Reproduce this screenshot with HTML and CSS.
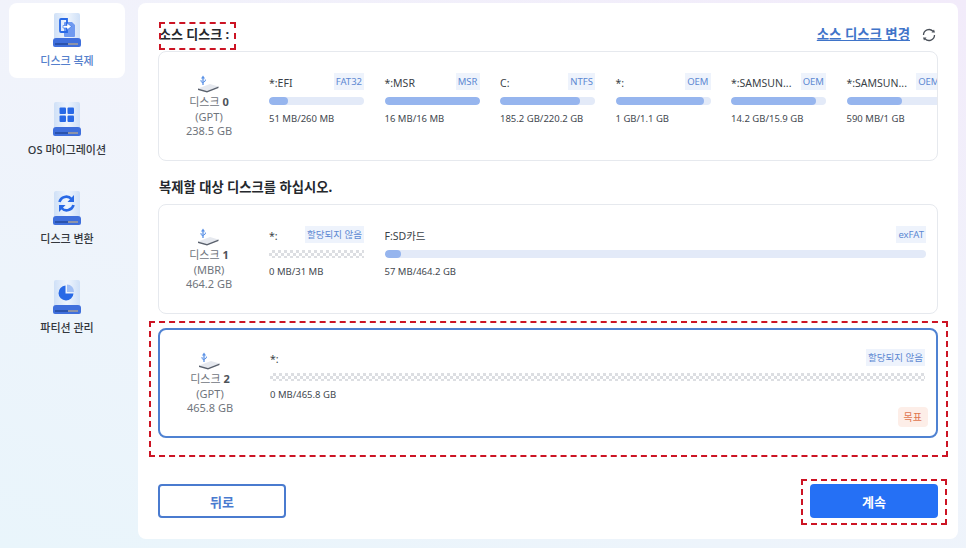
FILE: index.html
```html
<!DOCTYPE html>
<html lang="ko">
<head>
    <meta charset="utf-8">
    <title>디스크 복제</title>
    <link rel="stylesheet" href="styles.css">
</head>
<body>
    <svg class="defs" width="0" height="0">
        <defs>
            <linearGradient id="bookbody" x1="0" x2="1" y1="0" y2="0">
                <stop offset="0" stop-color="#cfe0f7"/>
                <stop offset="0.5" stop-color="#eff5fd"/>
                <stop offset="1" stop-color="#cfe0f7"/>
            </linearGradient>
        </defs>
        <symbol id="book" viewBox="0 0 28 34">
            <path d="M3 0h22a2 2 0 0 1 2 2v24H1V2a2 2 0 0 1 2-2z" fill="url(#bookbody)"/>
            <path d="M3 25h22a3 3 0 0 1 3 3v4a2 2 0 0 1-2 2H2a2 2 0 0 1-2-2v-4a3 3 0 0 1 3-3z" fill="#3f6fdc"/>
            <rect x="2" y="30" width="14" height="2" fill="#2a52ac"/>
            <rect x="15" y="30" width="10" height="2" fill="#8d93a8"/>
        </symbol>
        <symbol id="usbdisk" viewBox="0 0 22 22">
            <path d="M5 2.500L3 5.500h4z" fill="#5b92e6"/>
            <path d="M5 5v7" fill="none" stroke="#5b92e6" stroke-width="1.300"/>
            <path d="M5 9.500L7.300 8V6.500M5 10L3 8.500V7" fill="none" stroke="#5b92e6" stroke-width="1"/>
            <path d="M0 15.500L12 11l8.500 2.500L9 18z" fill="#e6e9ef"/>
            <path d="M0 15.500L9 18l11.500-4.500V15L9 19.500 0 17z" fill="#5a616d"/>
        </symbol>
    </svg>

    <div class="app">
        <nav class="sidebar">
            <a class="nav-item active">
                <svg class="nav-icon" viewBox="0 0 28 34">
                    <use href="#book"/>
                    <path d="M12 9h7l3 3v11a1 1 0 0 1-1 1h-9a1 1 0 0 1-1-1V10a1 1 0 0 1 1-1z" fill="#6f9af0"/>
                    <path d="M8 6h6v13H8a1 1 0 0 1-1-1V7a1 1 0 0 1 1-1z" fill="none" stroke="#2869e6" stroke-width="1.800"/>
                    <path d="M10 15v-2.500h4V10l4.500 3.500L14 17v-2z" fill="#fff" stroke="#2869e6" stroke-width="0.600"/>
                </svg>
                <span>디스크 복제</span>
            </a>
            <a class="nav-item">
                <svg class="nav-icon" viewBox="0 0 28 34">
                    <use href="#book"/>
                    <rect x="6.500" y="5.500" width="6.500" height="6.500" rx="1" fill="#2869e6"/>
                    <rect x="14.500" y="5.500" width="6.500" height="6.500" rx="1" fill="#2869e6"/>
                    <rect x="6.500" y="13.500" width="6.500" height="6.500" rx="1" fill="#2869e6"/>
                    <rect x="14.500" y="13.500" width="6.500" height="6.500" rx="1" fill="#2869e6"/>
                </svg>
                <span>OS 마이그레이션</span>
            </a>
            <a class="nav-item">
                <svg class="nav-icon" viewBox="0 0 28 34">
                    <use href="#book"/>
                    <path d="M6.500 11a7 7 0 0 1 12-3" fill="none" stroke="#2869e6" stroke-width="2.600"/>
                    <path d="M20.500 14a7 7 0 0 1-12 3" fill="none" stroke="#2869e6" stroke-width="2.600"/>
                    <path d="M21 4v7h-6.500z" fill="#2869e6"/>
                    <path d="M6 21v-7h6.500z" fill="#2869e6"/>
                </svg>
                <span>디스크 변환</span>
            </a>
            <a class="nav-item">
                <svg class="nav-icon" viewBox="0 0 28 34">
                    <use href="#book"/>
                    <path d="M12.500 5.500a7.500 7.500 0 1 0 8 8h-8z" fill="#2869e6"/>
                    <path d="M14 4.500a7 7 0 0 1 7 7.500h-7z" fill="#a3c0f4"/>
                </svg>
                <span>파티션 관리</span>
            </a>
        </nav>

        <main class="panel">
            <header class="panel-head">
                <h2 class="title marked">소스 디스크 :<i class="mark mark-title"></i></h2>
                <a class="change-link">소스 디스크 변경</a>
                <svg class="refresh" viewBox="0 0 16 16">
                    <path d="M2.500 8a5.500 5.500 0 0 1 9.500-3.700M13.500 8a5.500 5.500 0 0 1-9.500 3.700" fill="none" stroke="#4b515a" stroke-width="1.300"/>
                    <path d="M10.500 5.500h3.500L13 2.500zM5.500 10.500H2l1 3z" fill="#4b515a"/>
                </svg>
            </header>

            <section class="card">
                <div class="disk">
                    <svg class="disk-icon"><use href="#usbdisk"/></svg>
                    <div>디스크 <b>0</b></div>
                    <div>(GPT)</div>
                    <div>238.5 GB</div>
                </div>
                <div class="parts">
                    <div class="part">
                        <div class="part-top"><span>*:EFI</span><em class="tag">FAT32</em></div>
                        <div class="bar"><div class="fill" style="width: 20%"></div></div>
                        <div class="size">51 MB/260 MB</div>
                    </div>
                    <div class="part">
                        <div class="part-top"><span>*:MSR</span><em class="tag">MSR</em></div>
                        <div class="bar"><div class="fill" style="width: 100%"></div></div>
                        <div class="size">16 MB/16 MB</div>
                    </div>
                    <div class="part">
                        <div class="part-top"><span>C:</span><em class="tag">NTFS</em></div>
                        <div class="bar"><div class="fill" style="width: 84%"></div></div>
                        <div class="size">185.2 GB/220.2 GB</div>
                    </div>
                    <div class="part">
                        <div class="part-top"><span>*:</span><em class="tag">OEM</em></div>
                        <div class="bar"><div class="fill" style="width: 93%"></div></div>
                        <div class="size">1 GB/1.1 GB</div>
                    </div>
                    <div class="part">
                        <div class="part-top"><span>*:SAMSUN...</span><em class="tag">OEM</em></div>
                        <div class="bar"><div class="fill" style="width: 89%"></div></div>
                        <div class="size">14.2 GB/15.9 GB</div>
                    </div>
                    <div class="part">
                        <div class="part-top"><span>*:SAMSUN...</span><em class="tag">OEM</em></div>
                        <div class="bar"><div class="fill" style="width: 58%"></div></div>
                        <div class="size">590 MB/1 GB</div>
                    </div>
                </div>
            </section>

            <h2 class="title subtitle">복제할 대상 디스크를 하십시오.</h2>

            <section class="card">
                <div class="disk">
                    <svg class="disk-icon"><use href="#usbdisk"/></svg>
                    <div>디스크 <b>1</b></div>
                    <div>(MBR)</div>
                    <div>464.2 GB</div>
                </div>
                <div class="parts">
                    <div class="part">
                        <div class="part-top"><span>*:</span><em class="tag">할당되지 않음</em></div>
                        <div class="bar empty"></div>
                        <div class="size">0 MB/31 MB</div>
                    </div>
                    <div class="part grow">
                        <div class="part-top"><span>F:SD카드</span><em class="tag">exFAT</em></div>
                        <div class="bar"><div class="fill" style="width: 3%"></div></div>
                        <div class="size">57 MB/464.2 GB</div>
                    </div>
                </div>
            </section>

            <section class="card selected">
                <i class="mark mark-card"></i>
                <div class="disk">
                    <svg class="disk-icon"><use href="#usbdisk"/></svg>
                    <div>디스크 <b>2</b></div>
                    <div>(GPT)</div>
                    <div>465.8 GB</div>
                </div>
                <div class="parts">
                    <div class="part grow">
                        <div class="part-top"><span>*:</span><em class="tag">할당되지 않음</em></div>
                        <div class="bar empty"></div>
                        <div class="size">0 MB/465.8 GB</div>
                    </div>
                </div>
                <span class="target">목표</span>
            </section>

            <footer class="actions">
                <button class="btn btn-back">뒤로</button>
                <button class="btn btn-next marked">계속<i class="mark mark-next"></i></button>
            </footer>
        </main>
    </div>
</body>
</html>
```

FILE: styles.css
```css
html, body {
    margin: 0;
    height: 100%;
}
body {
    background: linear-gradient(200deg, #f2ebfa 0%, #f1f3fb 40%, #e9f5fb 100%);
    font-family: "Noto Sans", "Noto Sans CJK KR", sans-serif;
    color: #3a3f47;
    overflow: hidden;
}
.defs {
    position: absolute;
}
.app {
    display: flex;
    height: 548px;
    box-sizing: border-box;
    padding: 3px 8px 9px 0;
}

/* left menu */
.sidebar {
    width: 138px;
    flex: none;
    display: flex;
    flex-direction: column;
    gap: 14px;
    box-sizing: border-box;
    padding: 0 13px 0 9px;
}
.nav-item {
    height: 75px;
    box-sizing: border-box;
    padding-top: 10px;
    border-radius: 8px;
    display: flex;
    flex-direction: column;
    align-items: center;
    font-size: 11px;
    font-weight: 500;
    line-height: 16px;
    color: #33373d;
    white-space: nowrap;
}
.nav-item.active {
    background-color: #fff;
    color: #5580cc;
}
.nav-icon {
    width: 28px;
    height: 34px;
    margin-bottom: 6px;
}

/* main panel */
.panel {
    flex: 1;
    min-width: 0;
    background-color: #fff;
    border-radius: 8px;
    padding: 0 20px;
    display: flex;
    flex-direction: column;
}
.panel-head {
    height: 48px;
    display: flex;
    align-items: center;
    padding-top: 12px;
    box-sizing: border-box;
}
.title {
    margin: 0;
    padding-left: 1px;
    font-size: 13px;
    font-weight: 700;
    color: #25282d;
    white-space: nowrap;
}
.subtitle {
    height: 43px;
    line-height: 52px;
    font-size: 13.3px;
}
.change-link {
    margin-left: auto;
    font-size: 13.4px;
    font-weight: 700;
    color: #3f74c9;
    text-decoration: underline;
}
.refresh {
    width: 16px;
    height: 16px;
    margin: 3px 1px 0 11px;
}

/* disk cards */
.card {
    position: relative;
    height: 110px;
    flex: none;
    box-sizing: border-box;
    border: 1px solid #e6e9ee;
    border-radius: 8px;
    display: flex;
}
.card.selected {
    margin-top: 14px;
    border: 2px solid #4f82d2;
}
.disk {
    width: 100px;
    flex: none;
    padding-top: 21px;
    text-align: center;
    font-size: 11px;
    line-height: 14.5px;
    color: #70757d;
}
.selected .disk {
    padding-top: 20px;
}
.disk b {
    color: #4d5259;
}
.disk-icon {
    display: block;
    width: 22px;
    height: 22px;
    margin: 0 auto;
}
.parts {
    flex: 1;
    min-width: 0;
    overflow: hidden;
    display: flex;
    gap: 20.5px;
    padding: 21px 11px 0 10px;
}
.selected .parts {
    padding-top: 19px;
}
.part {
    width: 95px;
    flex: none;
}
.part.grow {
    flex: 1;
}
.part-top {
    height: 17px;
    display: flex;
    justify-content: space-between;
    align-items: center;
    font-size: 10.5px;
    color: #3a3f47;
    white-space: nowrap;
}
.part-top span {
    padding-top: 2px;
}
.tag {
    font-style: normal;
    font-size: 9.5px;
    line-height: 17px;
    padding: 0 2px;
    background-color: #eef3fc;
    color: #5d88d2;
}
.bar {
    height: 8px;
    margin-top: 7px;
    background-color: #e3eaf8;
    border-radius: 4px;
    overflow: hidden;
}
.fill {
    height: 100%;
    background-color: #96b5ee;
    border-radius: 4px;
}
.bar.empty {
    border-radius: 0;
    background: repeating-conic-gradient(#dcdee2 0 25%, #fff 0 50%) 0 0 / 6px 6px;
}
.size {
    margin-top: 7px;
    font-size: 9.5px;
    line-height: 14px;
    color: #43484f;
    white-space: nowrap;
}
.target {
    position: absolute;
    right: 8px;
    bottom: 9px;
    padding: 0 6px;
    line-height: 20px;
    border-radius: 4px;
    font-size: 10px;
    background-color: #fdeee8;
    color: #e0764f;
}

/* bottom buttons */
.actions {
    margin-top: 46px;
    display: flex;
    justify-content: space-between;
}
.btn {
    width: 128px;
    height: 34px;
    box-sizing: border-box;
    border-radius: 4px;
    font-family: inherit;
    font-size: 13px;
    font-weight: 700;
}
.btn-back {
    background-color: #fff;
    border: 2px solid #4a7bcf;
    color: #4a7bcf;
}
.btn-next {
    background-color: #2570f5;
    border: 0;
    color: #fff;
}

/* red dashed marks drawn over the screenshot */
.marked {
    position: relative;
}
.mark {
    position: absolute;
    border: 2px dashed #cc1424;
    pointer-events: none;
}
.mark-title {
    left: 1px;
    top: -2px;
    width: 73px;
    height: 24px;
}
.mark-card {
    left: -11px;
    top: -9px;
    right: -12px;
    bottom: -21px;
}
.mark-next {
    left: -9px;
    top: -5px;
    right: -9px;
    bottom: -7px;
}
```
